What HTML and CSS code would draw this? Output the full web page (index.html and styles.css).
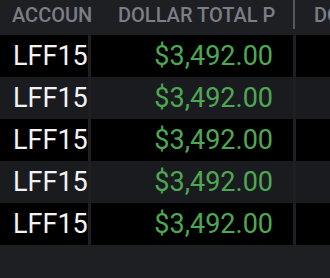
FILE: index.html
```html
<!DOCTYPE html>
<html>
<head>
<meta charset="utf-8">
<link rel="stylesheet" href="styles.css">
</head>
<body>
<div class="grid">
  <div class="row head">
    <div class="cell c1"><span class="clip">ACCOUN</span></div>
    <div class="cell c2 sep"><span class="clip">DOLLAR TOTAL P</span></div>
    <div class="cell c3"><span class="clip">DO</span></div>
  </div>
  <div class="row odd">
    <div class="cell c1"><span class="clip">LFF15</span></div>
    <div class="cell c2 num">$3,492.00</div>
    <div class="cell c3"></div>
  </div>
  <div class="row even">
    <div class="cell c1"><span class="clip">LFF15</span></div>
    <div class="cell c2 num">$3,492.00</div>
    <div class="cell c3"></div>
  </div>
  <div class="row odd">
    <div class="cell c1"><span class="clip">LFF15</span></div>
    <div class="cell c2 num">$3,492.00</div>
    <div class="cell c3"></div>
  </div>
  <div class="row even">
    <div class="cell c1"><span class="clip">LFF15</span></div>
    <div class="cell c2 num">$3,492.00</div>
    <div class="cell c3"></div>
  </div>
  <div class="row odd">
    <div class="cell c1"><span class="clip">LFF15</span></div>
    <div class="cell c2 num">$3,492.00</div>
    <div class="cell c3"></div>
  </div>
</div>
</body>
</html>
```
FILE: styles.css
```css
html, body {
  margin: 0;
  padding: 0;
  background: #1e1f23;
  width: 330px;
  height: 278px;
  overflow: hidden;
  font-family: Roboto, "Liberation Sans", sans-serif;
}
.grid {
  display: flex;
  flex-direction: column;
}
.row {
  display: grid;
  grid-template-columns: 88px 202px 36px;
  column-gap: 3px;
  height: 42px;
}
.row.head {
  height: 35px;
  background: #1e1f23;
  color: #7b7e85;
  font-size: 20px;
  font-weight: 500;
}
.row.odd .cell { background: #000; }
.row.even .cell { background: #1a1b1f; }
.cell {
  display: flex;
  align-items: center;
  white-space: nowrap;
  position: relative;
}
.clip {
  white-space: nowrap;
  display: block;
}
.head .c1 { padding-left: 12px; padding-bottom: 6px; }
.head .c2 { padding: 0 0 6px 27px; }
.head .c3 { padding-left: 18px; padding-bottom: 6px; }
.head .sep::after {
  content: "";
  position: absolute;
  right: -2px;
  top: 0;
  height: 29px;
  width: 2px;
  background: #55575d;
}
.row:not(.head) .c1 {
  color: #f2f2f2;
  font-size: 27px;
  padding-left: 13px;
}
.num {
  justify-content: flex-end;
  padding-right: 20px;
  color: #4ea853;
  font-size: 27px;
}
```
